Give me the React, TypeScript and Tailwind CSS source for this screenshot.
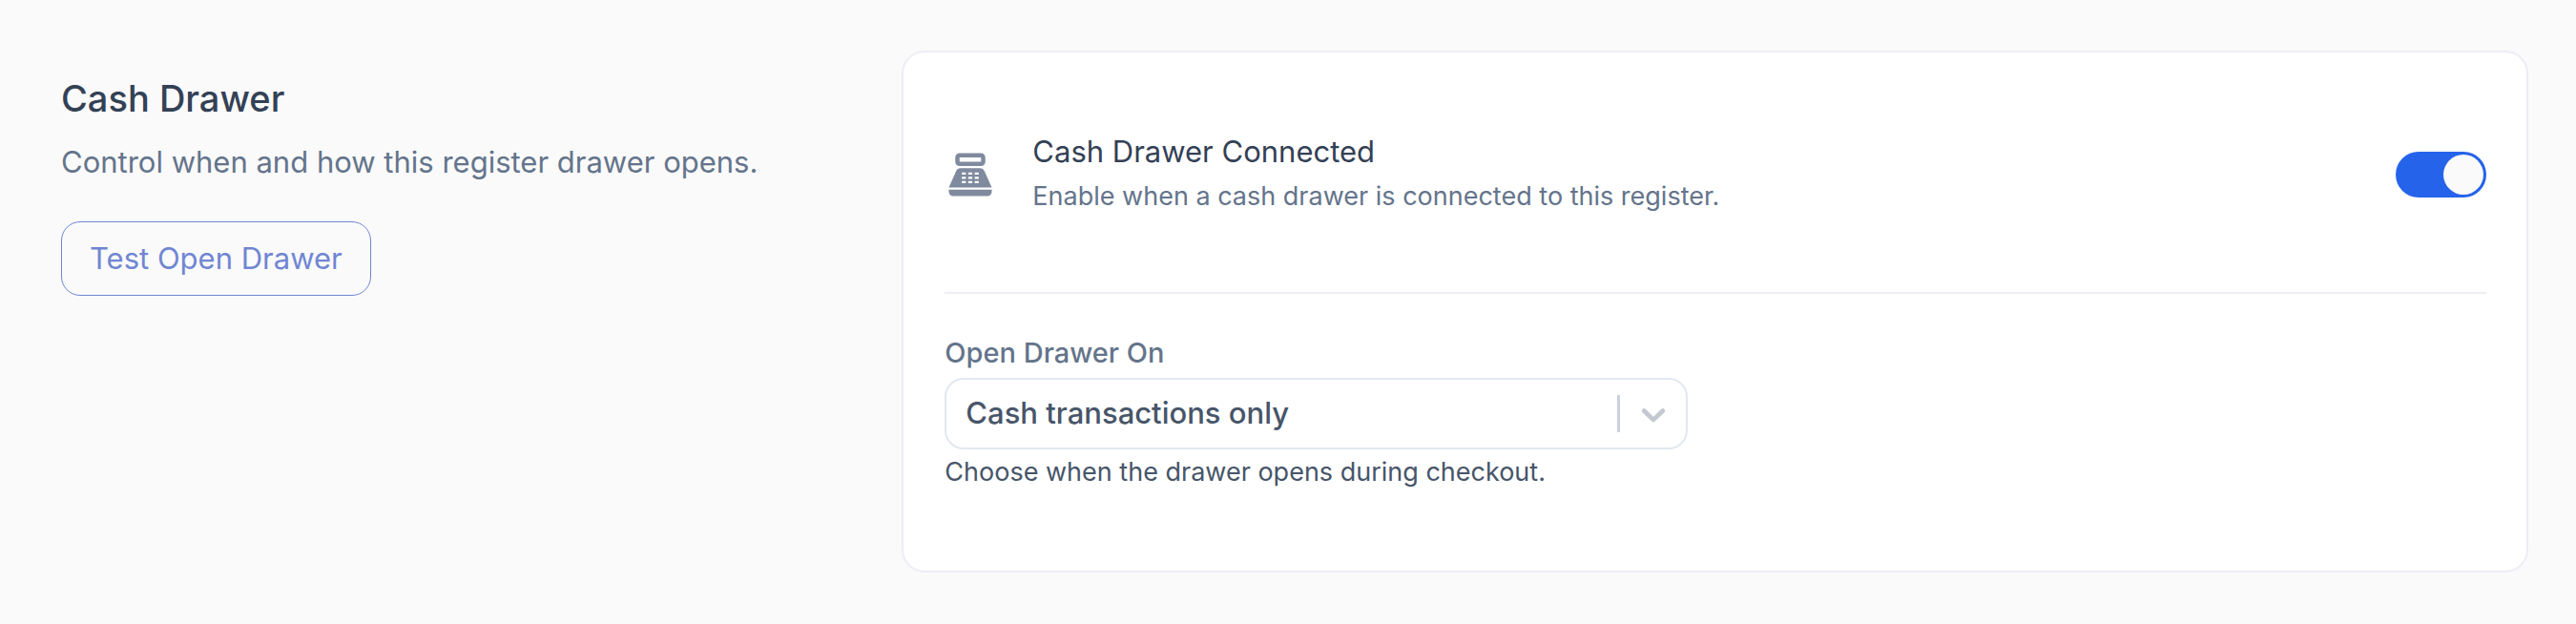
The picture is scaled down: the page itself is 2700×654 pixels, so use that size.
import { useState } from 'react'
import { MdPointOfSale } from 'react-icons/md'

const drawerOptions = [
  { value: 'cash', label: 'Cash transactions only' },
  { value: 'all', label: 'All transactions' },
  { value: 'never', label: 'Never' },
]

function Toggle({ checked, onChange }: { checked: boolean; onChange: (value: boolean) => void }) {
  return (
    <input
      id="drawer-connected"
      type="checkbox"
      role="switch"
      checked={checked}
      onChange={(e) => onChange(e.target.checked)}
      aria-describedby="drawer-connected-help"
      className="h-12 w-[95px] shrink-0 cursor-pointer appearance-none rounded-full bg-[#cbd5e1] p-[3px] transition-colors before:block before:size-[42px] before:rounded-full before:bg-[#fafafa] before:transition-transform checked:bg-[#2563eb] checked:before:translate-x-[47px]"
    />
  )
}

function DrawerSelect() {
  const [openOn, setOpenOn] = useState('cash')

  return (
    <div className="flex flex-col">
      <label htmlFor="open-drawer-on" className="text-[29px] leading-9 font-medium text-[#64748b]">
        Open Drawer On
      </label>
      <div className="relative mt-2 w-full max-w-[779px]">
        <select
          id="open-drawer-on"
          value={openOn}
          onChange={(e) => setOpenOn(e.target.value)}
          aria-describedby="open-drawer-on-help"
          className="h-[75px] w-full appearance-none rounded-[20px] border-2 border-[#e2e8f0] bg-white pr-24 pl-5 text-[31px] font-medium text-[#475569]"
        >
          {drawerOptions.map((option) => (
            <option key={option.value} value={option.value}>{option.label}</option>
          ))}
        </select>
        <div className="pointer-events-none absolute inset-y-0 right-[15px] flex items-center gap-[14px]">
          <span className="h-[39px] w-[3px] bg-[#cbd2dc]" />
          <svg viewBox="0 0 20 20" className="size-[42px] fill-[#c4c9d1]" aria-hidden="true">
            <path d="M4.516 7.548c0.436-0.446 1.043-0.481 1.576 0l3.908 3.747 3.908-3.747c0.533-0.481 1.141-0.446 1.574 0 0.436 0.445 0.408 1.197 0 1.615-0.406 0.418-4.695 4.502-4.695 4.502-0.217 0.223-0.502 0.335-0.787 0.335s-0.57-0.112-0.789-0.335c0 0-4.287-4.084-4.695-4.502s-0.436-1.17 0-1.615z" />
          </svg>
        </div>
      </div>
      <p id="open-drawer-on-help" className="mt-1 text-[27px] leading-10 text-[#475569]">
        Choose when the drawer opens during checkout.
      </p>
    </div>
  )
}

export default function App() {
  const [connected, setConnected] = useState(true)

  return (
    <main className="min-h-screen bg-[#fafafa] py-[53px] pr-[50px] pl-16 font-['Inter',sans-serif]">
      <div className="grid grid-cols-3 gap-[58px]">
        <section className="pt-6">
          <h2 className="text-[38px] leading-[52px] font-medium text-[#334155]">Cash Drawer</h2>
          <p className="mt-[21px] text-[31px] leading-10 whitespace-nowrap text-[#64748b]">
            Control when and how this register drawer opens.
          </p>
          <button type="button" className="mt-[42px] h-[78px] rounded-[20px] border border-[#7086d3] px-[29px] text-[31px] text-[#7086d3]">
            Test Open Drawer
          </button>
        </section>

        <section className="col-span-2 rounded-3xl border-2 border-[#ededf4] bg-white pt-[81px] pr-[42px] pb-[83px] pl-[43px]">
          <div className="flex items-center justify-between border-b-2 border-[#ededf4] pb-[76px]">
            <div className="flex items-center gap-[38px]">
              <MdPointOfSale className="size-[54px] text-[#808a9e]" aria-hidden="true" />
              <div>
                <label htmlFor="drawer-connected" className="block text-[31px] leading-[46px] text-[#334155]">
                  Cash Drawer Connected
                </label>
                <p id="drawer-connected-help" className="text-[27px] leading-[48px] text-[#64748b]">
                  Enable when a cash drawer is connected to this register.
                </p>
              </div>
            </div>
            <Toggle checked={connected} onChange={setConnected} />
          </div>
          <div className="pt-11">
            <DrawerSelect />
          </div>
        </section>
      </div>
    </main>
  )
}
